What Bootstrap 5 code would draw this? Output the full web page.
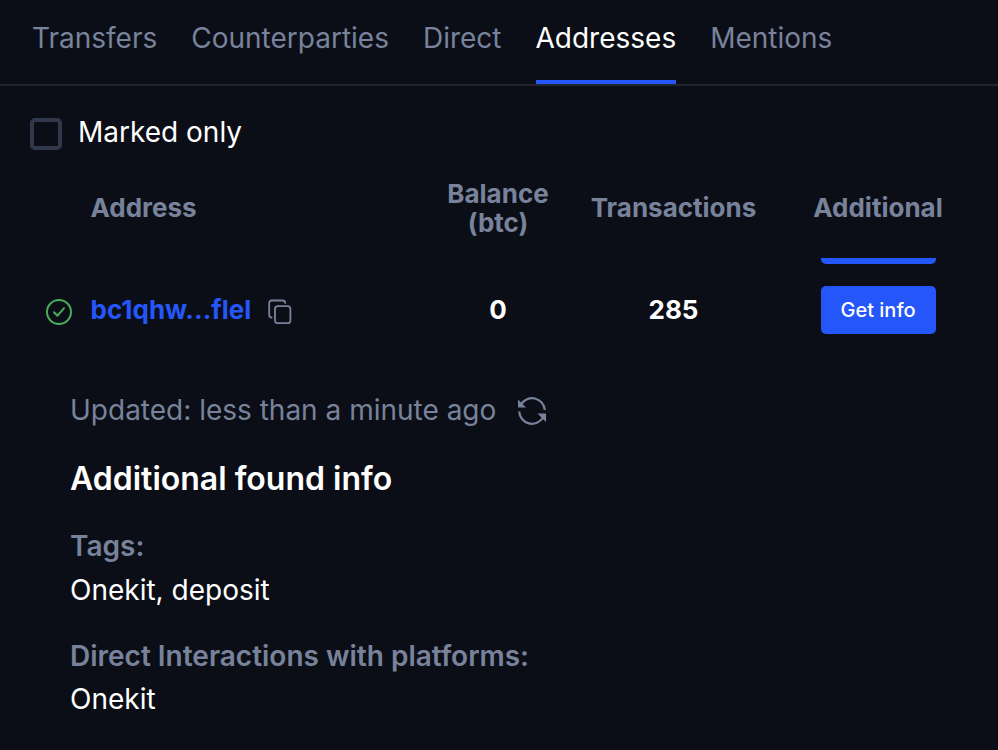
<!DOCTYPE html>
<html lang="en">
<head>
<meta charset="utf-8">
<meta name="viewport" content="width=device-width, initial-scale=1">
<title>Addresses</title>
<link href="https://cdn.jsdelivr.net/npm/bootstrap@5.3.0/dist/css/bootstrap.min.css" rel="stylesheet">
<style>
  body { background: #0b0e16; color: #fff; font-family: Inter, "Liberation Sans", sans-serif; font-size: 28px; line-height: 34px; height: 750px; overflow: hidden; }
  .muted { color: #78839b; }
  .tabs { height: 86px; padding: 0 32px; gap: 34px; border-bottom: 2px solid #20242f; }
  .tabs .nav-link { color: #78839b; padding: 21px 0 0; height: 84px; white-space: nowrap; }
  .tabs .nav-link.active { color: #fff; border-bottom: 4px solid #2456f9; }
  .filter { padding: 29px 30px 0; height: 78px; gap: 16px; }
  .filter .form-check-input { width: 32px; height: 32px; margin: 3px 0 0; border: 4px solid #31384b; border-radius: 5px; background: transparent; }
  .filter label { line-height: 34px; }
  .grid-line { display: grid; grid-template-columns: 45.5px 333.5px 148px 203px 206px; padding-left: 45px; align-items: center; font-size: 26px; line-height: 29px; font-weight: 700; }
  .table-top { height: 94px; padding-bottom: 7px; }
  .rows { height: 110px; overflow: hidden; }
  .row-clipped { height: 6px; grid-template-rows: 6px; align-items: end; }
  .row-main { height: 92px; }
  .value { padding-bottom: 2px; }
  .btn-info-blue { --bs-btn-bg: #2456f9; --bs-btn-color: #fff; --bs-btn-hover-bg: #1c48dc; --bs-btn-hover-color: #fff; width: 115px; height: 48px; padding: 0; border: 0; border-radius: 5px; font-size: 20px; font-weight: 500; }
  .address { color: #2456f9; }
  .copy-icon { margin-left: 15.5px; }
  .details { padding: 25px 70px 0; }
  .updated { height: 34px; }
  .details h2 { font-size: 32px; line-height: 40px; font-weight: 600; margin: 32px 0 30px; }
  .refresh { margin: 2px 0 0 21px; }
  .group-label { font-weight: 600; margin-bottom: 10px; }
  .group-value { margin-bottom: 32px; }
  .group-value + .group-label { margin-bottom: 9px; }
</style>
<script src="https://cdn.jsdelivr.net/npm/bootstrap@5.3.0/dist/js/bootstrap.bundle.min.js"></script>
</head>
<body>
<nav class="tabs nav flex-nowrap">
  <a class="nav-link" href="#">Transfers</a>
  <a class="nav-link" href="#">Counterparties</a>
  <a class="nav-link" href="#">Direct</a>
  <a class="nav-link active" href="#">Addresses</a>
  <a class="nav-link" href="#">Mentions</a>
</nav>
<div class="filter d-flex align-items-start">
  <input class="form-check-input" type="checkbox" id="marked">
  <label for="marked">Marked only</label>
</div>
<div class="grid-line table-top muted">
  <div></div><div>Address</div><div class="text-center">Balance<br>(btc)</div><div class="text-center">Transactions</div><div class="text-center">Additional</div>
</div>
<div class="rows">
  <div class="grid-line row-clipped overflow-hidden">
    <div></div><div></div><div></div><div></div><div class="d-flex justify-content-center"><button class="btn btn-info-blue" aria-label="Get info"></button></div>
  </div>
  <div class="grid-line row-main">
    <svg class="mt-1" width="28" height="28" viewBox="0 0 28 28" fill="none" stroke="#4aad5b" stroke-width="2" stroke-linecap="round" stroke-linejoin="round"><circle cx="14" cy="14" r="12"/><path d="M9 14.2l3.400 3.600 6.600-7.600"/></svg>
    <div class="d-flex align-items-center"><span class="address value">bc1qhw...flel</span>
      <svg class="copy-icon mt-1" width="26" height="26" viewBox="0 0 26 26" fill="none" stroke="#78839b" stroke-width="1.8" stroke-linecap="round"><rect x="8" y="7.200" width="15.400" height="17" rx="2.800"/><path d="M4.600 18.500C3.100 18.500 2.200 17.600 2.200 16.300V4C2.200 2.400 3.200 1.500 4.600 1.500H15.500C17 1.500 18.200 2.300 18.200 3.900"/></svg></div>
    <div class="text-center value">0</div><div class="text-center value">285</div>
    <div class="text-center"><button class="btn btn-info-blue">Get info</button></div>
  </div>
</div>
<section class="details">
  <div class="updated d-flex align-items-center muted"><span>Updated: less than a minute ago</span>
    <svg class="refresh" width="30" height="30" viewBox="0 0 30 30" fill="none" stroke="#78839b" stroke-width="2.200"><path d="M4 8.500A12.800 12.800 0 0 1 27.800 14M2.200 15.500A12.800 12.800 0 0 0 26 21.500"/><path d="M1 3.500v8h8zM29 26v-8.500h-8.500z" fill="#78839b" stroke="none"/></svg></div>
  <h2>Additional found info</h2>
  <div class="group-label muted">Tags:</div>
  <div class="group-value">Onekit, deposit</div>
  <div class="group-label muted">Direct Interactions with platforms:</div>
  <div class="group-value">Onekit</div>
</section>
</body>
</html>
